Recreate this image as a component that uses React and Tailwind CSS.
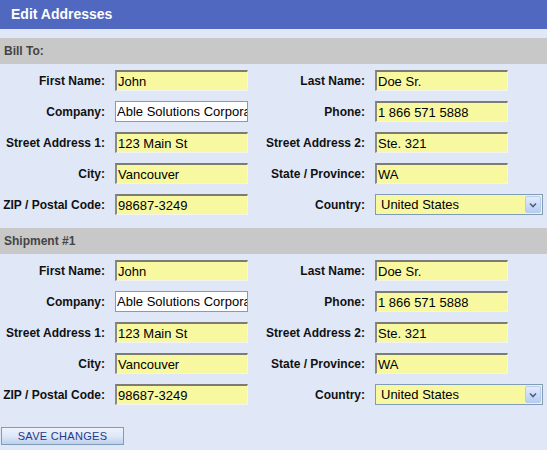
import React from 'react';

const yellowInput =
  "h-[21px] w-[133px] bg-[#f8f8a0] border-t-2 border-l-2 border-r border-b border-t-[#7c7c74] border-l-[#8a8a80] border-r-[#f4f4ee] border-b-[#f4f4ee] pl-[1px] text-[13px] text-black outline-none";

const whiteInput =
  "h-[21px] w-[133px] bg-white border border-[#7f9db9] pl-[1px] text-[13px] text-black outline-none";

const Label = ({ children }) => (
  <label className="text-right text-[12px] font-bold text-[#111]">{children}</label>
);

const CountrySelect = () => (
  <div className="relative h-[21px] w-[168px] border border-[#7f9db9] bg-[#f8f8a0]">
    <select
      defaultValue="United States"
      className="block h-[19px] w-full appearance-none bg-transparent py-0 pl-[5px] text-[13px] leading-[19px] text-black outline-none"
    >
      <option>United States</option>
      <option>Canada</option>
    </select>
    <div className="pointer-events-none absolute right-[1px] top-[1px] flex h-[17px] w-[16px] items-center justify-center rounded-[2px] border border-[#b9cbef] bg-gradient-to-b from-[#e3ebfd] to-[#b8cdf4]">
      <svg width="8" height="6" viewBox="0 0 8 6">
        <path d="M1 1.5 L4 4.5 L7 1.5" fill="none" stroke="#4d6185" strokeWidth="1.6" />
      </svg>
    </div>
  </div>
);

const AddressSection = ({ title, data }) => (
  <div>
    <div className="flex h-[26px] items-center bg-[#c8c8c8] pl-[4px] text-[12px] font-bold text-[#444]">
      {title}
    </div>
    <div className="grid grid-cols-[105px_133px_107px_auto] items-center gap-x-[10px] gap-y-[10px] pt-[6px] pb-[13px]">
      <Label>First Name:</Label>
      <input className={yellowInput} defaultValue={data.firstName} />
      <Label>Last Name:</Label>
      <input className={yellowInput} defaultValue={data.lastName} />

      <Label>Company:</Label>
      <input className={whiteInput} defaultValue={data.company} />
      <Label>Phone:</Label>
      <input className={yellowInput} defaultValue={data.phone} />

      <Label>Street Address 1:</Label>
      <input className={yellowInput} defaultValue={data.street1} />
      <Label>Street Address 2:</Label>
      <input className={yellowInput} defaultValue={data.street2} />

      <Label>City:</Label>
      <input className={yellowInput} defaultValue={data.city} />
      <Label>State / Province:</Label>
      <input className={yellowInput} defaultValue={data.state} />

      <Label>ZIP / Postal Code:</Label>
      <input className={yellowInput} defaultValue={data.zip} />
      <Label>Country:</Label>
      <CountrySelect />
    </div>
  </div>
);

const address = {
  firstName: "John",
  lastName: "Doe Sr.",
  company: "Able Solutions Corporation",
  phone: "1 866 571 5888",
  street1: "123 Main St",
  street2: "Ste. 321",
  city: "Vancouver",
  state: "WA",
  zip: "98687-3249",
};

const App = () => {
  return (
    <div className="min-h-screen bg-[#e0e7f7] font-['Liberation_Sans',Arial,sans-serif]">
      <div className="flex h-[29px] items-center bg-[#5068c0] pl-[11px] text-[14px] font-bold text-white">
        Edit Addresses
      </div>
      <div className="mt-[9px]">
        <AddressSection title="Bill To:" data={address} />
        <AddressSection title="Shipment #1" data={address} />
      </div>
      <div className="mt-[9px] flex pl-[1px]">
        <button
          type="button"
          className="h-[18px] w-[123px] border border-[#7f9db9] bg-gradient-to-b from-[#eef3fc] via-[#dfe8f8] to-[#bdd0ee] text-[11px] leading-[16px] tracking-[0.3px] text-[#1f3a8c]"
        >
          SAVE CHANGES
        </button>
      </div>
    </div>
  );
};

export default App;
